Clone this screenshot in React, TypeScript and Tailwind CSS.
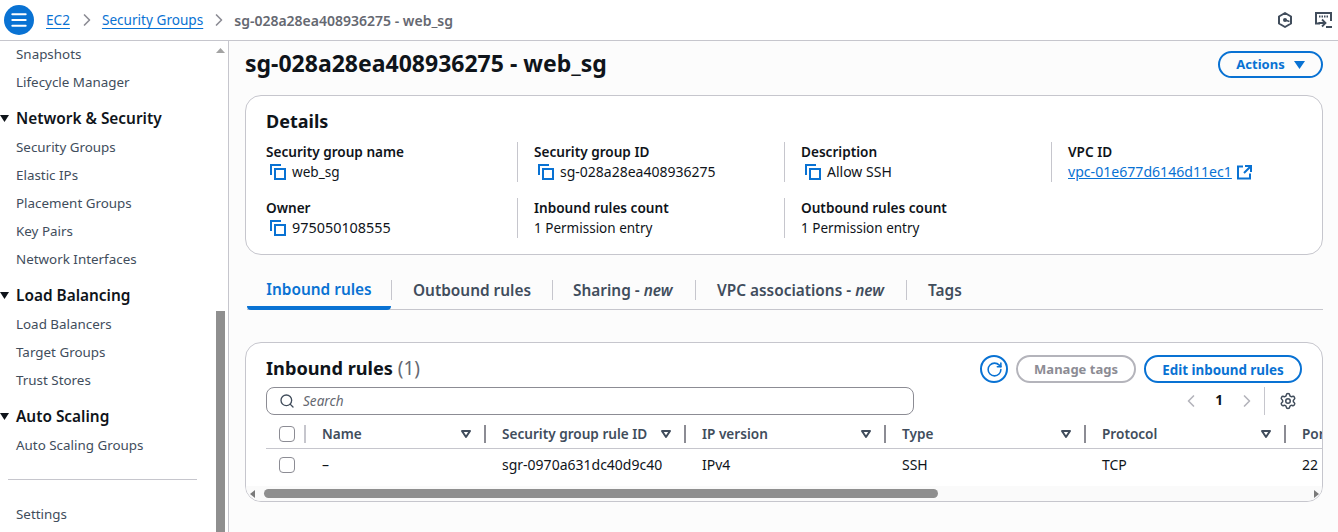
import { Menu, ChevronRight, ChevronLeft, Search, Settings, RotateCw } from "lucide-react";

const font = { fontFamily: '"Noto Sans", sans-serif' };

const sidebar = [
  { items: ["Snapshots", "Lifecycle Manager"] },
  { title: "Network & Security", items: ["Security Groups", "Elastic IPs", "Placement Groups", "Key Pairs", "Network Interfaces"] },
  { title: "Load Balancing", items: ["Load Balancers", "Target Groups", "Trust Stores"] },
  { title: "Auto Scaling", items: ["Auto Scaling Groups"] },
];

const details = [
  { label: "Security group name", value: "web_sg", size: "text-[13.6px]", copy: true },
  { label: "Security group ID", value: "sg-028a28ea408936275", size: "text-[14px]", copy: true },
  { label: "Description", value: "Allow SSH", size: "text-[14px]", copy: true },
  { label: "VPC ID", value: "vpc-01e677d6146d11ec1", size: "text-[14.1px]", link: true },
  { label: "Owner", value: "975050108555", size: "text-[14.4px]", copy: true },
  { label: "Inbound rules count", value: "1 Permission entry", size: "text-[13.5px]" },
  { label: "Outbound rules count", value: "1 Permission entry", size: "text-[13.5px]" },
];

const columns = [
  { name: "Name", value: "–", width: "w-[180px]" },
  { name: "Security group rule ID", value: "sgr-0970a631dc40d9c40", width: "w-[200px]" },
  { name: "IP version", value: "IPv4", width: "w-[200px]" },
  { name: "Type", value: "SSH", width: "w-[200px]" },
  { name: "Protocol", value: "TCP", width: "w-[200px]" },
];

const CopyIcon = () => (
  <svg width="16" height="16" viewBox="0 0 16 16" fill="none" stroke="#0972d3" strokeWidth="2" className="shrink-0">
    <rect x="5" y="5" width="10" height="10" />
    <path d="M1 11V1h10" />
  </svg>
);

const SortIcon = () => (
  <svg width="12" height="10" viewBox="0 0 12 10" fill="none" stroke="#414d5c" strokeWidth="2" className="shrink-0">
    <path d="M2 2h8L6 8z" strokeLinejoin="round" />
  </svg>
);

const SectionCaret = () => (
  <svg width="9" height="7" viewBox="0 0 9 7" fill="#0f141a" className="shrink-0">
    <path d="M0 0h9L4.5 7z" />
  </svg>
);

const App = () => {
  return (
    <div className="w-[1338px] h-[532px] overflow-hidden flex flex-col bg-[#fcfcfc] text-[#0f141a] text-[14px]" style={font}>
      {/* Top bar */}
      <header className="h-[41px] shrink-0 flex items-center bg-white border-b border-[#c6c6cd] pl-1 pr-[6px]">
        <div className="w-[30px] h-[30px] rounded-full bg-[#0972d3] flex items-center justify-center text-white">
          <Menu size={20} strokeWidth={2.4} />
        </div>
        <a className="ml-3 text-[13.6px] text-[#0972d3] underline underline-offset-[3px]">EC2</a>
        <ChevronRight size={20} className="ml-[7px] mr-[5px] text-[#8c8c94]" />
        <a className="text-[13.6px] text-[#0972d3] underline underline-offset-[3px]">Security Groups</a>
        <ChevronRight size={20} className="ml-[6px] mr-[5px] text-[#8c8c94]" />
        <span className="font-semibold text-[14px] text-[#656871]">sg-028a28ea408936275 - web_sg</span>
        <div className="ml-auto flex items-center gap-[22px]">
          <svg width="16" height="16" viewBox="0 0 16 16" fill="none" stroke="#414d5c" strokeWidth="2">
            <path d="M8 1l6 3.5v7L8 15l-6-3.5v-7z" strokeLinejoin="round" />
            <circle cx="8" cy="8" r="2" fill="#414d5c" stroke="none" />
            <path d="M8 8l4.5 1.5" strokeWidth="1.5" />
          </svg>
          <svg width="17" height="16" viewBox="0 0 17 16" fill="none" stroke="#414d5c" strokeWidth="2">
            <path d="M5 11.5H1V1h15v8" />
            <path d="M4 4.5h9" strokeDasharray="1.5 1" />
            <path d="M7 7.5l3.5 3.5L7 14.5M3.5 11h6.5" strokeWidth="1.8" />
            <path d="M11 15h6" />
          </svg>
        </div>
      </header>

      <div className="flex-1 flex min-h-0">
        {/* Sidebar */}
        <aside className="w-[229px] shrink-0 flex bg-white border-r border-[#c6c6cd] overflow-hidden">
          <nav className="w-[216px] shrink-0 text-[#414d5c] text-[13.4px]">
            {sidebar.map((section) => (
              <div key={section.items[0]} className="mb-[8px]">
                {section.title && (
                  <div className="h-[29px] pb-[2px] flex items-center text-[#0f141a] font-semibold text-[15.4px]">
                    <SectionCaret />
                    <span className="ml-[7px]">{section.title}</span>
                  </div>
                )}
                {section.items.map((item) => (
                  <div key={item} className="h-[28px] pb-[2px] flex items-center pl-4">
                    {item}
                  </div>
                ))}
              </div>
            ))}
            <div className="ml-2 mr-[19px] mt-[19px] border-t border-[#c6c6cd]" />
            <div className="mt-[21px] h-[28px] pb-[2px] flex items-center pl-4">Settings</div>
          </nav>
          <div className="w-[9px] flex flex-col">
            <svg width="9" height="5" viewBox="0 0 9 5" fill="#a3a3a3" className="mt-[7px]">
              <path d="M0 5h9L4.5 0z" />
            </svg>
            <div className="mt-[258px] flex-1 bg-[#8f8f8f]" />
          </div>
        </aside>

        {/* Main */}
        <main className="flex-1 min-w-0 pl-4 pr-[15px]">
          <div className="h-[54px] pb-[10px] flex items-center justify-between">
            <h1 className="font-bold text-[23px] leading-none">sg-028a28ea408936275 - web_sg</h1>
            <button className="w-[105px] h-[27px] mt-[2px] pt-[2px] rounded-full border-2 border-[#0972d3] text-[#0972d3] font-bold text-[13px] flex items-center justify-center gap-[9px]">
              Actions
              <svg width="11" height="8" viewBox="0 0 11 8" fill="#0972d3">
                <path d="M0 0h11L5.5 8z" />
              </svg>
            </button>
          </div>

          {/* Details card */}
          <section className="h-[160px] bg-white border border-[#c6c6cd] rounded-2xl pt-[13px] pl-5">
            <h2 className="font-bold text-[18px] leading-[24px]">Details</h2>
            <div className="mt-[9px] grid grid-cols-[251px_267px_267px_1fr] gap-y-4">
              {details.map((d, i) => (
                <div
                  key={d.label}
                  className={`h-[40px] ${i % 4 === 0 ? "" : "border-l border-[#c6c6cd] pl-4"} ${i === 4 ? "col-start-1" : ""}`}
                >
                  <div className="font-semibold text-[13.6px] leading-[20px]">{d.label}</div>
                  <div className={`${d.size} leading-[20px] flex items-center gap-[6px]`}>
                    {d.copy && (
                      <span className="ml-1">
                        <CopyIcon />
                      </span>
                    )}
                    {d.link ? (
                      <a className="flex items-center gap-[5px] text-[#0972d3]">
                        <span className="underline">{d.value}</span>
                        <svg width="15" height="15" viewBox="0 0 15 15" fill="none" stroke="#0972d3" strokeWidth="2">
                          <path d="M6 1.5H1v12h12v-5" />
                          <path d="M8 1h6v6M14 1L7 8" />
                        </svg>
                      </a>
                    ) : (
                      d.value
                    )}
                  </div>
                </div>
              ))}
            </div>
          </section>

          {/* Tabs */}
          <div className="mt-[22px] ml-[2px] h-[33px] flex items-start border-b border-[#c6c6cd] font-semibold text-[15.4px] text-[#414d5c]">
            <div className="h-[33px] w-[144px] -mb-[1px] flex items-center justify-center pb-[4px] text-[#0972d3] border-b-4 border-[#0972d3] rounded-b-sm">Inbound rules</div>
            <div className="h-[20px] mt-[3px] pt-[2px] border-l border-[#c6c6cd] pl-[21px] w-[161px] flex items-center">Outbound rules</div>
            <div className="h-[20px] mt-[3px] pt-[2px] border-l border-[#c6c6cd] pl-[20px] w-[143px] flex items-center gap-1">
              Sharing - <em>new</em>
            </div>
            <div className="h-[20px] mt-[3px] pt-[2px] border-l border-[#c6c6cd] pl-[21px] w-[211px] flex items-center gap-1">
              VPC associations - <em>new</em>
            </div>
            <div className="h-[20px] mt-[3px] pt-[2px] border-l border-[#c6c6cd] pl-[21px] flex items-center">Tags</div>
          </div>

          {/* Inbound rules card */}
          <section className="mt-[32px] h-[160px] bg-white border border-[#c6c6cd] rounded-2xl overflow-hidden">
            <div className="pl-5 pr-[20px] pt-[12px] flex justify-between items-center">
              <h2 className="font-bold text-[18.2px] leading-[25px] -mt-[2px]">
                Inbound rules <span className="font-normal text-[19px] text-[#656871]">(1)</span>
              </h2>
              <div className="flex items-center gap-2">
                <button className="w-[28px] h-[28px] rounded-full border-2 border-[#0972d3] text-[#0972d3] flex items-center justify-center">
                  <RotateCw size={17} strokeWidth={2.2} />
                </button>
                <button className="w-[120px] h-[28px] pt-[2px] rounded-full border-2 border-[#b4b4bb] text-[#8c8c94] font-bold text-[13px]">Manage tags</button>
                <button className="w-[158px] h-[28px] pt-[2px] rounded-full border-2 border-[#0972d3] text-[#0972d3] font-bold text-[13.4px]">Edit inbound rules</button>
              </div>
            </div>

            <div className="mt-[3px] pl-5 pr-[25px] h-[29px] flex items-center justify-between">
              <div className="w-[648px] h-[28px] pt-[1px] rounded-lg border border-[#8c8c94] flex items-center pl-3 gap-2 text-[#656871] text-[13.6px] italic">
                <Search size={16} strokeWidth={2} className="text-[#414d5c]" />
                Search
              </div>
              <div className="flex items-center text-[#b4b4bb]">
                <ChevronLeft size={20} />
                <span className="mx-[14px] font-bold text-[13.6px] text-[#0f141a]">1</span>
                <ChevronRight size={20} />
                <div className="ml-[7px] h-[28px] border-l border-[#c6c6cd] pl-[14px] flex items-center text-[#414d5c]">
                  <Settings size={18} strokeWidth={2} />
                </div>
              </div>
            </div>

            {/* Table */}
            <div className="ml-5 mt-[4px] w-[1200px]">
              <div className="h-[30px] flex items-center border-b border-[#c6c6cd] font-semibold text-[13.6px] text-[#414d5c]">
                <div className="w-[40px] h-[18px] flex items-center justify-between pl-[13px]">
                  <span className="w-4 h-4 rounded-[4px] border border-[#8c8c94] bg-white" />
                  <span className="h-full w-[2px] bg-[#c6c6cd]" />
                </div>
                {columns.map((c) => (
                  <div key={c.name} className={`${c.width} pl-[16px] pr-[12px] h-[18px] flex items-center justify-between border-r-2 border-[#8c8c94]`}>
                    <span className="pt-[2px]">{c.name}</span>
                    <SortIcon />
                  </div>
                ))}
                <div className="pl-[16px] pt-[2px] whitespace-nowrap">Port</div>
              </div>
              <div className="h-[37px] pb-[6px] flex items-center text-[14px]">
                <div className="w-[40px] pl-[13px] flex items-center">
                  <span className="w-4 h-4 rounded-[4px] border border-[#8c8c94] bg-white" />
                </div>
                {columns.map((c) => (
                  <div key={c.name} className={`${c.width} pl-[16px]`}>
                    {c.value}
                  </div>
                ))}
                <div className="pl-[16px]">22</div>
              </div>
            </div>

            {/* Horizontal scrollbar */}
            <div className="h-[15px] bg-[#fafafa] flex items-center pl-[4px] pr-[3px]">
              <svg width="5" height="8" viewBox="0 0 5 8" fill="#7a7a7a">
                <path d="M5 0v8L0 4z" />
              </svg>
              <div className="ml-[9px] w-[674px] h-[9px] rounded-full bg-[#8f8f8f]" />
              <svg width="5" height="8" viewBox="0 0 5 8" fill="#7a7a7a" className="ml-auto">
                <path d="M0 0v8l5-4z" />
              </svg>
            </div>
          </section>
        </main>
      </div>
    </div>
  );
};

export default App;
